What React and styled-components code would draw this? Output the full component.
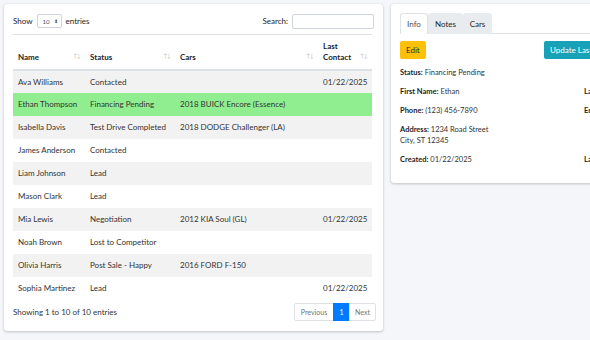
import React from 'react';
import styled, { createGlobalStyle } from 'styled-components';

const GlobalStyle = createGlobalStyle`
  html, body {
    margin: 0;
    background: #f4f6f9;
    overflow: hidden;
    font-family: Lato, "Liberation Sans", sans-serif;
    color: #212529;
  }
`;

const Page = styled.div`
  display: flex;
  align-items: flex-start;
  gap: 8px;
  padding: 4px;
  width: 700px;
`;

const Card = styled.div`
  background: #fff;
  border-radius: 3px;
  box-shadow: 0 0 1px rgba(0, 0, 0, 0.13), 0 1px 3px rgba(0, 0, 0, 0.2);
  padding: 9px 9px ${(p) => p.$bottom || 9}px;
  width: ${(p) => p.$width}px;
  box-sizing: border-box;
  flex-shrink: 0;
`;

const TopBar = styled.div`
  display: flex;
  justify-content: space-between;
  align-items: center;
  height: 16px;
  font-size: 8px;
  margin-bottom: 5px;
`;

const Label = styled.label`
  display: flex;
  align-items: center;
  gap: 4px;
`;

const SelectBox = styled.span`
  display: inline-flex;
  align-items: center;
  justify-content: space-between;
  width: 25px;
  height: 14px;
  box-sizing: border-box;
  border: 1px solid #ced4da;
  border-radius: 2px;
  padding: 0 3px 0 5px;
  font-size: 6px;
  color: #495057;
`;

const SearchBox = styled.span`
  display: inline-block;
  width: 82px;
  height: 15px;
  box-sizing: border-box;
  border: 1px solid #ced4da;
  border-radius: 2px;
`;

const Table = styled.table`
  width: 359px;
  table-layout: fixed;
  border-collapse: collapse;
  font-size: 8px;
  border-top: 1px solid #dee2e6;
`;

const Th = styled.th`
  box-sizing: border-box;
  text-align: left;
  font-weight: 700;
  vertical-align: bottom;
  height: 35px;
  padding: 0 5px 6px 5px;
  border-bottom: 2px solid #dee2e6;
  position: relative;
  width: ${(p) => (p.$w ? `${p.$w}px` : 'auto')};
  line-height: 11px;
`;

const Sort = styled.span`
  position: absolute;
  right: 5px;
  bottom: 8px;
  color: #c8c8c8;
  font-size: 6px;
  letter-spacing: -1px;
  font-weight: 400;
`;

const Tr = styled.tr`
  background: ${(p) => (p.$active ? '#90ee90' : p.$odd ? '#f2f2f2' : '#fff')};
`;

const Td = styled.td`
  box-sizing: border-box;
  height: 23px;
  padding: 0 5px;
  color: #333;
  white-space: nowrap;
`;

const Footer = styled.div`
  display: flex;
  justify-content: space-between;
  align-items: center;
  margin: 3px -2px 0 0;
  font-size: 8px;
  color: #333;
`;

const Pager = styled.div`
  display: flex;
  height: 18px;
  font-size: 7px;
`;

const PageBtn = styled.span`
  display: flex;
  align-items: center;
  justify-content: center;
  width: ${(p) => p.$w}px;
  box-sizing: border-box;
  border: 1px solid #dee2e6;
  margin-left: -1px;
  color: ${(p) => (p.$active ? '#fff' : '#6c757d')};
  background: ${(p) => (p.$active ? '#007bff' : '#fff')};
  border-color: ${(p) => (p.$active ? '#007bff' : '#dee2e6')};
  &:first-child {
    border-radius: 2px 0 0 2px;
  }
  &:last-child {
    border-radius: 0 2px 2px 0;
  }
`;

const Tabs = styled.div`
  display: flex;
  border-bottom: 1px solid #dee2e6;
  height: 20px;
  font-size: 8px;
`;

const Tab = styled.span`
  display: flex;
  align-items: center;
  justify-content: center;
  width: ${(p) => p.$w}px;
  box-sizing: border-box;
  background: ${(p) => (p.$active ? '#fff' : '#e9ecef')};
  color: ${(p) => (p.$active ? '#495057' : '#212529')};
  border: 1px solid ${(p) => (p.$active ? '#dee2e6' : '#e9ecef')};
  border-bottom: none;
  border-radius: 3px 3px 0 0;
  margin-bottom: -1px;
`;

const ButtonRow = styled.div`
  display: flex;
  justify-content: space-between;
  margin: 7px 0 8px;
`;

const Button = styled.span`
  display: inline-flex;
  align-items: center;
  height: 18px;
  padding: 0 ${(p) => p.$pad}px;
  border-radius: 2px;
  font-size: 8px;
  background: ${(p) => p.$bg};
  color: ${(p) => p.$color};
`;

const InfoGrid = styled.div`
  display: grid;
  grid-template-columns: 184px 1fr;
  row-gap: 8px;
  font-size: 7.5px;
  color: #333;
  line-height: 11px;
  padding-bottom: 9px;
`;

const Field = styled.div`
  grid-column: ${(p) => (p.$full ? '1 / -1' : 'auto')};
  white-space: nowrap;
  b {
    color: #212529;
  }
`;

const rows = [
  ['Ava Williams', 'Contacted', '', '01/22/2025'],
  ['Ethan Thompson', 'Financing Pending', '2018 BUICK Encore (Essence)', ''],
  ['Isabella Davis', 'Test Drive Completed', '2018 DODGE Challenger (LA)', ''],
  ['James Anderson', 'Contacted', '', ''],
  ['Liam Johnson', 'Lead', '', ''],
  ['Mason Clark', 'Lead', '', ''],
  ['Mia Lewis', 'Negotiation', '2012 KIA Soul (GL)', '01/22/2025'],
  ['Noah Brown', 'Lost to Competitor', '', ''],
  ['Olivia Harris', 'Post Sale - Happy', '2016 FORD F-150', ''],
  ['Sophia Martinez', 'Lead', '', '01/22/2025'],
];

export default function App() {
  return (
    <>
      <GlobalStyle />
      <Page>
        <Card $width={379} $bottom={10}>
          <TopBar>
            <Label>
              Show
              <SelectBox>
                10 <span style={{ fontSize: '5px' }}>⬍</span>
              </SelectBox>
              entries
            </Label>
            <Label>
              Search:
              <SearchBox />
            </Label>
          </TopBar>
          <Table>
            <thead>
              <tr>
                <Th $w={72}>Name<Sort>↑↓</Sort></Th>
                <Th $w={90}>Status<Sort>↑↓</Sort></Th>
                <Th $w={143}>Cars<Sort>↑↓</Sort></Th>
                <Th>Last<br />Contact<Sort>↑↓</Sort></Th>
              </tr>
            </thead>
            <tbody>
              {rows.map((r, i) => (
                <Tr key={r[0]} $odd={i % 2 === 0} $active={i === 1}>
                  {r.map((c, j) => (
                    <Td key={j}>{c}</Td>
                  ))}
                </Tr>
              ))}
            </tbody>
          </Table>
          <Footer>
            <span>Showing 1 to 10 of 10 entries</span>
            <Pager>
              <PageBtn $w={40}>Previous</PageBtn>
              <PageBtn $w={17} $active>1</PageBtn>
              <PageBtn $w={27}>Next</PageBtn>
            </Pager>
          </Footer>
        </Card>
        <Card $width={246}>
          <Tabs>
            <Tab $w={28} $active>Info</Tab>
            <Tab $w={35}>Notes</Tab>
            <Tab $w={29}>Cars</Tab>
          </Tabs>
          <ButtonRow>
            <Button $pad={6} $bg="#ffc107" $color="#1f2d3d">Edit</Button>
            <Button $pad={6} $bg="#17a2b8" $color="#fff">Update Last Contact</Button>
          </ButtonRow>
          <InfoGrid>
            <Field $full><b>Status:</b> Financing Pending</Field>
            <Field><b>First Name:</b> Ethan</Field>
            <Field><b>Last Name:</b> Thompson</Field>
            <Field><b>Phone:</b> (123) 456-7890</Field>
            <Field><b>Email:</b> ethan@example.com</Field>
            <Field $full><b>Address:</b> 1234 Road Street<br />City, ST 12345</Field>
            <Field><b>Created:</b> 01/22/2025</Field>
            <Field><b>Last Contact:</b> 01/22/2025</Field>
          </InfoGrid>
        </Card>
      </Page>
    </>
  );
}
